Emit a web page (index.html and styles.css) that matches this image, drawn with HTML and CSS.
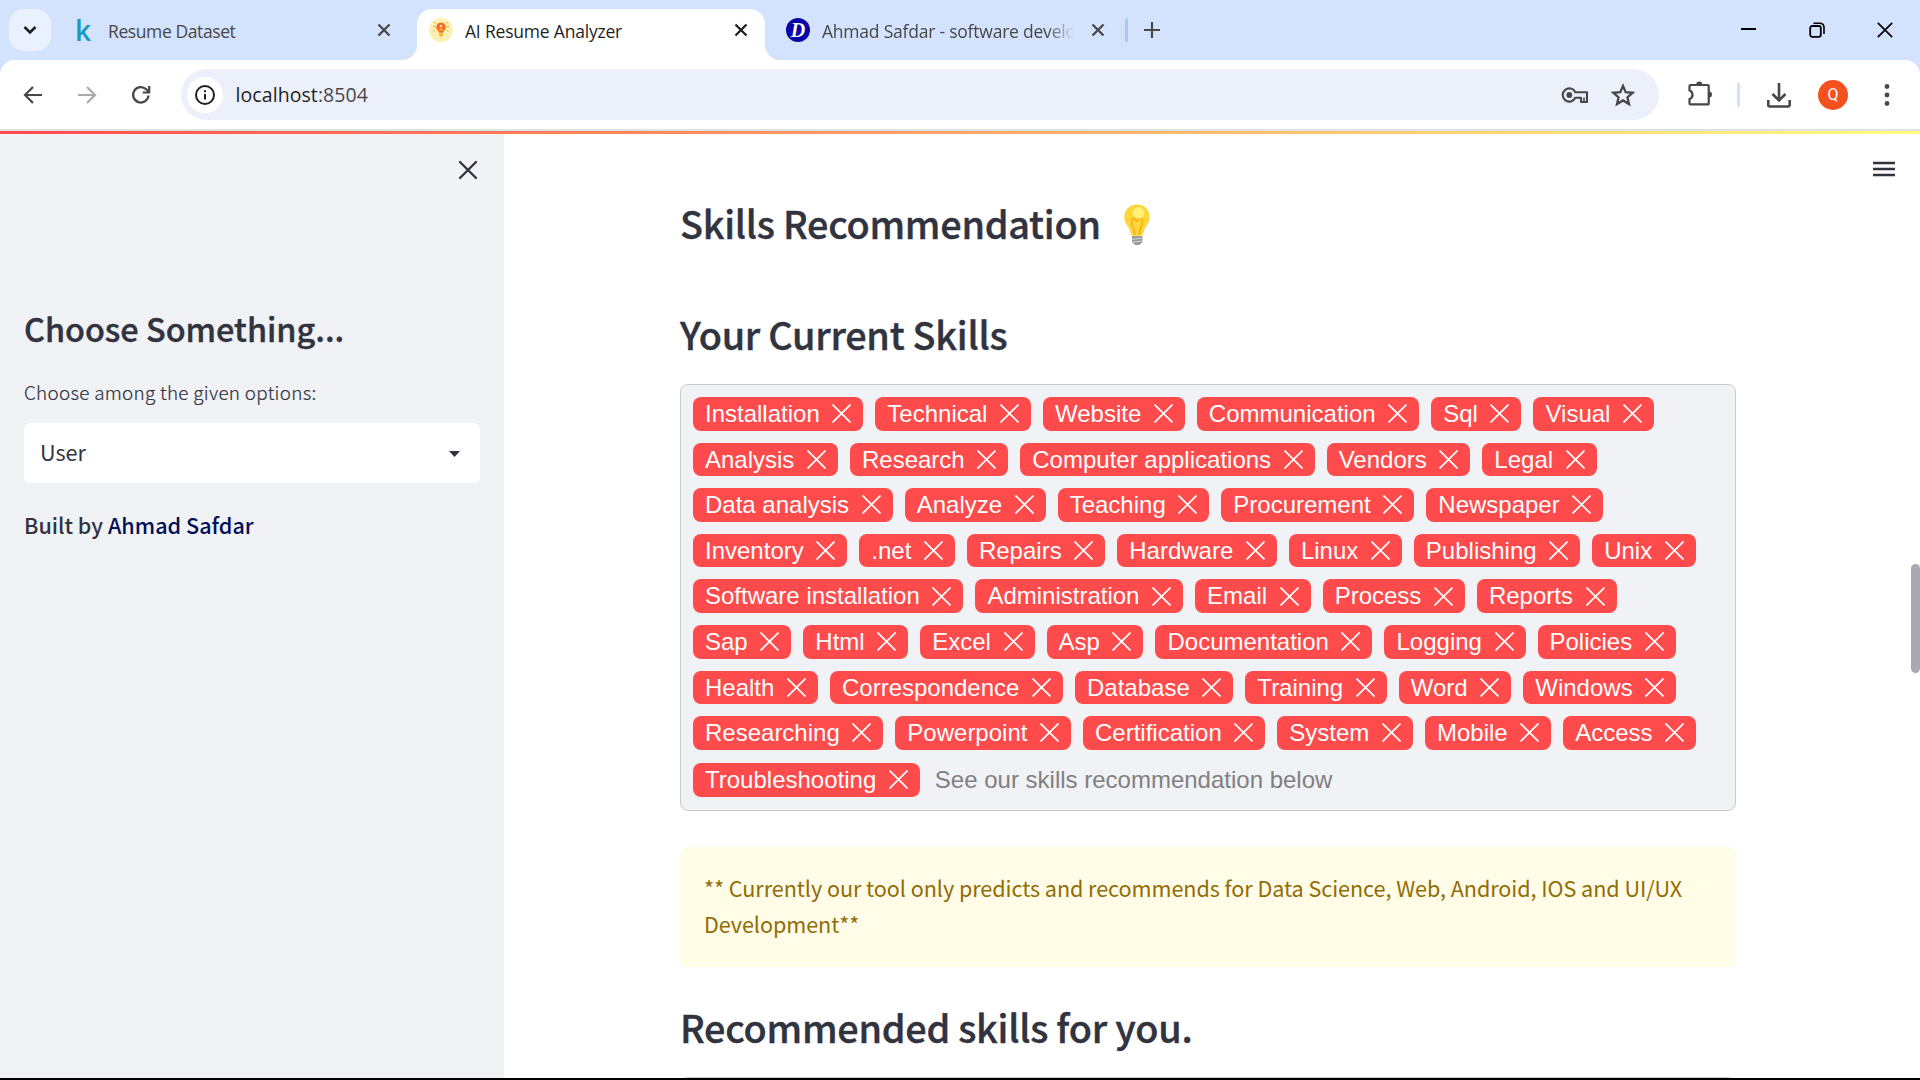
FILE: index.html
```html
<!DOCTYPE html>
<html lang="en">
<head>
<meta charset="utf-8">
<title>AI Resume Analyzer</title>
<link rel="stylesheet" href="styles.css">
</head>
<body>
<div class="window">
  <header class="tabstrip">
    <div class="tab-search"><svg width="14" height="10" viewBox="0 0 14 10"><path d="M1.500 2l5.500 5.500L12.500 2" fill="none" stroke="#1f1f1f" stroke-width="2.600"/></svg></div>
    <div class="tab tab-first">
      <span class="fav fav-k">k</span>
      <span class="tab-title t-first">Resume Dataset</span>
      <svg class="tab-x" width="14" height="14" viewBox="0 0 14 14"><path d="M1.500 1.500l11 11M12.500 1.500l-11 11"/></svg>
    </div>
    <div class="tab tab-active">
      <svg class="fav" width="24" height="24" viewBox="0 0 24 24"><circle cx="12" cy="12" r="12" fill="#fdf0b4"/><path d="M4 8l2 1M20 8l-2 1M5 4l1.500 1.500M19 4l-1.500 1.500M4.500 13l1.500-.5M19.500 13l-1.500-.5" stroke="#e8a020" stroke-width="1"/><path d="M12 4.600a4.600 4.600 0 0 0-3 8.200c.7.600.9 1.200.9 2h4.200c0-.8.2-1.400.9-2A4.600 4.600 0 0 0 12 4.600z" fill="#f8701c"/><circle cx="12" cy="8" r="1.200" fill="#fdd"/><path d="M10.200 12.500c0-3.400 3.600-3.400 3.600 0" fill="#fbb040"/><path d="M9.900 15.500h4.200v1.400l-1.300 1.500h-1.600l-1.300-1.500z" fill="#f9b01e"/></svg>
      <span class="tab-title t-active">AI Resume Analyzer</span>
      <svg class="tab-x" width="14" height="14" viewBox="0 0 14 14"><path d="M1.500 1.500l11 11M12.500 1.500l-11 11"/></svg>
    </div>
    <div class="tab tab-last">
      <span class="fav fav-d">D</span>
      <span class="tab-title t-last">Ahmad Safdar - software develo</span>
      <svg class="tab-x" width="14" height="14" viewBox="0 0 14 14"><path d="M1.500 1.500l11 11M12.500 1.500l-11 11"/></svg>
    </div>
    <span class="tab-sep"></span>
    <svg class="tab-new" width="16" height="16" viewBox="0 0 16 16"><path d="M8 0v16M0 8h16" stroke="#474747" stroke-width="2.200"/></svg>
    <div class="controls">
      <svg width="16" height="16" viewBox="0 0 16 16"><path d="M1 7h15" stroke="#000" stroke-width="2"/></svg>
      <svg width="16" height="16" viewBox="0 0 16 16"><rect x="1.200" y="4" width="10.600" height="10.800" rx="2" fill="none" stroke="#000" stroke-width="1.800"/><path d="M4.500 1.200h6.500a4 4 0 0 1 4 4V12" fill="none" stroke="#000" stroke-width="1.600"/></svg>
      <svg width="16" height="16" viewBox="0 0 16 16"><path d="M.8.8l14.400 14.400M15.200.8L.8 15.200" stroke="#000" stroke-width="1.700"/></svg>
    </div>
  </header>

  <nav class="toolbar">
    <div class="nav-icons">
      <svg width="20" height="20" viewBox="0 0 20 20"><path d="M19 10H2.500M10 2l-8 8 8 8" fill="none" stroke="#474747" stroke-width="2.200"/></svg>
      <svg width="20" height="20" viewBox="0 0 20 20"><path d="M1 10h16.500M10 2l8 8-8 8" fill="none" stroke="#ababab" stroke-width="2.200"/></svg>
      <svg width="20" height="20" viewBox="0 0 20 20"><path d="M17.500 10.500a7.700 7.700 0 1 1-2.300-6.200L17.500 6.500M18.200 1v6.500h-6.500" fill="none" stroke="#474747" stroke-width="2.200"/></svg>
    </div>
    <div class="omnibox">
      <span class="site-info"><svg width="20" height="20" viewBox="0 0 20 20"><circle cx="10" cy="10" r="9" fill="none" stroke="#1f1f1f" stroke-width="2"/><path d="M10 9v5.500M10 5.200v2" stroke="#1f1f1f" stroke-width="2"/></svg></span>
      <span class="url"><b>localhost</b>:8504</span>
      <svg class="key" width="28" height="18" viewBox="0 0 28 18"><path d="M14.300 6.300a6.600 6.600 0 1 0 0 5.400h5.700v4.300h6V6.300z" fill="none" stroke="#474747" stroke-width="2.100" stroke-linejoin="round"/><path d="M23 11.500v4" stroke="#474747" stroke-width="1.600"/><circle cx="8.300" cy="9" r="2.900" fill="#474747"/></svg>
      <svg class="star" width="24" height="24" viewBox="0 0 24 24"><path d="M12 2.900l2.700 6.300 6.900.6-5.200 4.500 1.600 6.700-6-3.600L6 21l1.600-6.700-5.200-4.500 6.900-.6z" fill="none" stroke="#474747" stroke-width="2.300"/></svg>
    </div>
    <svg class="puzzle" width="26" height="26" viewBox="0 0 26 26"><path d="M3.500 5h17.500a.7.7 0 0 1 .7.700v18a.7.700 0 0 1-.7.700H3.500a1 1 0 0 1-1-1v-4.200c4-2 4-7.200 0-9V6a1 1 0 0 1 1-1z" fill="none" stroke="#474747" stroke-width="2.200"/><path d="M9.200 4.500a3 3 0 0 1 6 0zM22 11.500a3 3 0 0 1 0 6z" fill="#474747"/></svg>
    <span class="bar-sep"></span>
    <svg class="download" width="24" height="26" viewBox="0 0 24 26"><path d="M12 1v17M5.500 12l6.500 6.500 6.500-6.500M1.300 18v5a1.500 1.500 0 0 0 1.500 1.500h18.400a1.500 1.500 0 0 0 1.500-1.500v-5" fill="none" stroke="#474747" stroke-width="2.600"/></svg>
    <span class="avatar">Q</span>
    <svg class="dots" width="6" height="24" viewBox="0 0 6 24" fill="#474747"><circle cx="3" cy="3.500" r="2.400"/><circle cx="3" cy="12" r="2.400"/><circle cx="3" cy="20.500" r="2.400"/></svg>
  </nav>

  <div class="page">
    <div class="decoration"></div>
    <aside class="sidebar">
      <svg class="side-close" width="20" height="20" viewBox="0 0 20 20"><path d="M2 2l16 16M18 2L2 18" stroke="#31333f" stroke-width="2.300" stroke-linecap="round"/></svg>
      <h2 class="side-title">Choose Something...</h2>
      <p class="side-label">Choose among the given options:</p>
      <div class="select"><span class="select-value">User</span><svg width="11" height="6" viewBox="0 0 11 6"><path d="M0 0h11L5.500 6z" fill="#31333f"/></svg></div>
      <h5 class="built">Built by <a>Ahmad Safdar</a></h5>
    </aside>
    <main class="main">
      <svg class="menu" width="22" height="17" viewBox="0 0 22 17"><path d="M0 2h22M0 8h22M0 14h22" stroke="#31333f" stroke-width="2.600"/></svg>
      <div class="content">
        <h3 class="heading h-rec"><span>Skills Recommendation</span>
          <svg class="bulb" width="26" height="42" viewBox="0 0 26 42"><path d="M13 .5C5.500.5.300 6 .300 13c0 4.700 2.200 7.200 4.200 10.500 1.500 2.500 2 4.500 2.500 6.500.3 1.200 1 1.800 2 1.800h8c1 0 1.700-.6 2-1.800.5-2 1-4 2.500-6.500 2-3.300 4.200-5.800 4.200-10.500C25.700 6 20.500.5 13 .5z" fill="#fdd63a"/><path d="M10.700 31c0-7-3.200-9-3.200-13.500 0-3.500 3.300-4.700 4.200-1.500.6 2 2 2 2.600 0 .9-3.200 4.200-2 4.200 1.500 0 4.500-3.200 6.500-3.200 13.500" fill="none" stroke="#fbb219" stroke-width="1.800"/><circle cx="14.500" cy="8.800" r="5.800" fill="#fff176"/><path d="M8 32h10.500v6L15.500 41h-4.500L8 38z" fill="#9a9a9a"/><path d="M8 35.300l10.500-1.300M8 38.300l10.500-1.300" stroke="#d5d5d5" stroke-width="1"/></svg>
        </h3>
        <h3 class="heading h-cur">Your Current Skills</h3>
        <div class="tags" id="tags"><span class="placeholder">See our skills recommendation below</span></div>
        <div class="alert">** Currently our tool only predicts and recommends for Data Science, Web, Android, IOS and UI/UX Development**</div>
        <h3 class="heading h-for">Recommended skills for you.</h3>
        <div class="next-box"></div>
      </div>
      <span class="thumb"></span>
    </main>
  </div>
  <div class="bottom-edge"></div>
</div>
<script src="tags.js"></script>
</body>
</html>
```
FILE: styles.css
```css
* { box-sizing: border-box; }
body { margin: 0; overflow: hidden; background: #fff; }
svg { display: block; flex: none; }
h2, h3, h5, p { margin: 0; }

.window {
  width: 1920px;
  height: 1080px;
  display: flex;
  flex-direction: column;
  overflow: hidden;
  background: #d3e2fd;
  font-family: "Open Sans", "Noto Sans", sans-serif;
}

/* tab strip */
.tabstrip { height: 60px; flex: none; display: flex; align-items: center; padding-left: 9px; }
.tab-search { width: 42px; height: 42px; border-radius: 15px; background: #eaf1fe; display: flex; align-items: center; justify-content: center; }
.tab { display: flex; align-items: center; height: 51px; align-self: flex-end; padding-bottom: 9px; }
.tab-first { width: 366px; padding-left: 24px; }
.tab-active { position: relative; width: 348px; padding-left: 12px; background: #fff; border-radius: 15px 15px 0 0; }
.tab-active::before, .tab-active::after { content: ""; position: absolute; bottom: 0; width: 15px; height: 15px; }
.tab-active::before { left: -15px; background: radial-gradient(circle at 0 0, transparent 14.500px, #fff 15.500px); }
.tab-active::after { right: -15px; background: radial-gradient(circle at 100% 0, transparent 14.500px, #fff 15.500px); }
.tab-last { width: 361px; padding-left: 21px; }
.fav { width: 24px; height: 24px; flex: none; }
.fav-k { color: #1899c4; font: 600 28px/24px "Open Sans", sans-serif; }
.fav-d { border-radius: 50%; background: #0a04a8; color: #fff; font: italic 700 20px/24px "Liberation Serif", serif; text-align: center; }
.tab-title { flex: none; font-size: 17.500px; line-height: 24px; padding-top: 2px; color: #474747; white-space: nowrap; overflow: hidden; }
.t-first { width: 269px; letter-spacing: -.4px; margin-left: 9px; }
.t-active { width: 269px; letter-spacing: -.2px; margin-left: 12px; color: #1f1f1f; }
.t-last { width: 251px; letter-spacing: -.22px; margin-left: 12px; margin-right: 18px; -webkit-mask-image: linear-gradient(90deg, #000 224px, transparent 252px); mask-image: linear-gradient(90deg, #000 224px, transparent 252px); }
.tab-x { stroke: #474747; stroke-width: 2.300; fill: none; }
.tab-active .tab-x { stroke: #1f1f1f; }
.tab-sep { width: 3px; height: 24px; background: #a8c7fa; border-radius: 2px; margin-left: -1px; }
.tab-new { margin-left: 16px; }
.controls { margin-left: auto; display: flex; gap: 52.500px; padding-right: 27px; }

/* toolbar */
.toolbar { height: 71px; flex: none; display: flex; align-items: center; background: #fff; border-radius: 15px 15px 0 0; border-bottom: 2px solid #dfe2e3; }
.nav-icons { width: 181px; display: flex; gap: 34px; padding-left: 23px; }
.omnibox { width: 1478px; height: 51px; border-radius: 26px; background: #ecf0fa; display: flex; align-items: center; padding-left: 6px; flex: none; }
.site-info { width: 36px; height: 36px; border-radius: 50%; background: #fff; display: flex; align-items: center; justify-content: center; }
.url { margin-left: 12.500px; font-size: 19.500px; line-height: 26px; letter-spacing: .08px; color: #474747; }
.url b { font-weight: 400; color: #1f1f1f; }
.key { margin-left: auto; }
.star { margin: 0 24px 0 22px; }
.puzzle { margin-left: 28px; margin-top: -3px; }
.bar-sep { width: 3px; height: 24px; background: #d3e2fd; margin-left: 24px; }
.download { margin-left: 27px; }
.avatar { width: 30px; height: 30px; border-radius: 50%; background: #f4511e; color: #fff; font: 400 16px/30px Roboto, sans-serif; text-align: center; margin-left: 27px; }
.dots { margin-left: 36px; }

/* page */
.page { position: relative; flex: 1; display: flex; overflow: hidden; background: #fff; min-height: 0; font-family: "Noto Sans CJK SC", sans-serif; color: #31333f; }
.decoration { position: absolute; top: 0; left: 0; right: 0; height: 3px; background: linear-gradient(90deg, #ff4b4b, #fffd80); z-index: 2; }
.sidebar { width: 504px; flex: none; background: #f0f2f6; padding: 29px 24px 0; display: flex; flex-direction: column; }
.side-close { align-self: flex-end; margin: 0 2px 126px 0; }
.side-title { font-size: 32.400px; line-height: 44px; font-weight: 500; -webkit-text-stroke: .4px #31333f; }
.side-label { font-size: 18.900px; line-height: 30px; margin-top: 27px; font-weight: 300; letter-spacing: .27px; -webkit-text-stroke: .2px #31333f; }
.select { height: 60px; margin-top: 16px; background: #fff; border-radius: 6px; display: flex; align-items: center; justify-content: space-between; padding: 0 20px 0 16px; font-size: 21.600px; line-height: 36px; }
.select-value { margin-top: -2px; }
.select svg { margin-top: 2px; }
.built { font-size: 21.600px; line-height: 38px; margin-top: 23px; font-weight: 500; }
.built a { color: #010f59; }

.main { position: relative; flex: 1; padding-left: 176px; }
.menu { position: absolute; right: 25px; top: 30px; }
.content { width: 1056px; padding-top: 67px; }
.heading { font-size: 37.800px; line-height: 50px; font-weight: 500; letter-spacing: -.26px; -webkit-text-stroke: .4px #31333f; white-space: nowrap; }
.h-rec { display: flex; align-items: center; }
.h-rec span { width: 420px; margin-right: 24px; }
.bulb { margin-top: 3px; }
.h-cur { margin-top: 61px; }
.tags { margin-top: 25px; height: 427px; border: 1px solid #c9cbd1; border-radius: 8px; background: #f0f2f6; padding: 12px 36px 12px 12px; display: flex; flex-wrap: wrap; align-content: flex-start; align-items: center; gap: 12px; font: 24px/33.600px "Liberation Sans", Arial, sans-serif; }
.tag { height: 33.600px; display: flex; align-items: center; gap: 12.600px; padding: 0 12px; border-radius: 8px; background: #ff4b4b; color: #fff; white-space: nowrap; }
.tag svg { stroke: #fff; stroke-width: 1.700; fill: none; }
.placeholder { color: #808080; line-height: 36px; margin-left: 3px; }
.alert { margin-top: 36px; height: 120px; padding: 23px 24px; border-radius: 6px; background: #fffce7; color: #926c05; font-size: 21.600px; line-height: 36px; letter-spacing: -.06px; }
.h-for { margin-top: 35px; }
.next-box { margin-top: 25px; height: 60px; border: 1px solid #c9cbd1; border-radius: 8px; background: #f0f2f6; }
.thumb { position: absolute; right: 0; top: 433px; width: 9px; height: 109px; border-radius: 5px; background: #a9aab1; }
.bottom-edge { height: 2px; flex: none; background: #000; }
```
FILE: tags.js
```js
const skills = [
  "Installation", "Technical", "Website", "Communication", "Sql", "Visual",
  "Analysis", "Research", "Computer applications", "Vendors", "Legal",
  "Data analysis", "Analyze", "Teaching", "Procurement", "Newspaper",
  "Inventory", ".net", "Repairs", "Hardware", "Linux", "Publishing", "Unix",
  "Software installation", "Administration", "Email", "Process", "Reports",
  "Sap", "Html", "Excel", "Asp", "Documentation", "Logging", "Policies",
  "Health", "Correspondence", "Database", "Training", "Word", "Windows",
  "Researching", "Powerpoint", "Certification", "System", "Mobile", "Access",
  "Troubleshooting"
];
const cross = '<svg width="19" height="19" viewBox="0 0 19 19"><path d="M.5.500l18 18M18.500.500l-18 18"/></svg>';
document.querySelector(".placeholder").insertAdjacentHTML(
  "beforebegin",
  skills.map(s => `<span class="tag">${s}${cross}</span>`).join("")
);
```
